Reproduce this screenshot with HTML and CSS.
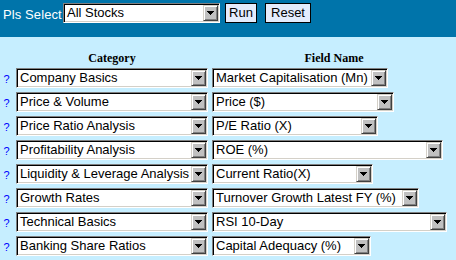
FILE: index.html
```html
<!DOCTYPE html>
<html>
<head>
<meta charset="utf-8">
<link rel="stylesheet" href="styles.css">
</head>
<body>
<header class="top">
  <span class="lbl">Pls Select</span>
  <span class="sel sel-stocks"><span class="val">All Stocks</span><span class="btn"><svg width="7" height="4" viewBox="0 0 7 4"><polygon points="0,0 7,0 3.5,4" fill="#000"/></svg></span></span>
  <button class="pb pb-run">Run</button>
  <button class="pb pb-reset">Reset</button>
</header>
<main class="grid">
  <div class="hd hd-cat">Category</div>
  <div class="hd hd-field">Field Name</div>

  <a class="q">?</a>
  <span class="sel cat"><span class="val">Company Basics</span><span class="btn"><svg width="7" height="4" viewBox="0 0 7 4"><polygon points="0,0 7,0 3.5,4" fill="#000"/></svg></span></span>
  <span class="sel fld w176"><span class="val">Market Capitalisation (Mn)</span><span class="btn"><svg width="7" height="4" viewBox="0 0 7 4"><polygon points="0,0 7,0 3.5,4" fill="#000"/></svg></span></span>

  <a class="q">?</a>
  <span class="sel cat"><span class="val">Price &amp; Volume</span><span class="btn"><svg width="7" height="4" viewBox="0 0 7 4"><polygon points="0,0 7,0 3.5,4" fill="#000"/></svg></span></span>
  <span class="sel fld w182"><span class="val">Price ($)</span><span class="btn"><svg width="7" height="4" viewBox="0 0 7 4"><polygon points="0,0 7,0 3.5,4" fill="#000"/></svg></span></span>

  <a class="q">?</a>
  <span class="sel cat"><span class="val">Price Ratio Analysis</span><span class="btn"><svg width="7" height="4" viewBox="0 0 7 4"><polygon points="0,0 7,0 3.5,4" fill="#000"/></svg></span></span>
  <span class="sel fld w166"><span class="val">P/E Ratio (X)</span><span class="btn"><svg width="7" height="4" viewBox="0 0 7 4"><polygon points="0,0 7,0 3.5,4" fill="#000"/></svg></span></span>

  <a class="q">?</a>
  <span class="sel cat"><span class="val">Profitability Analysis</span><span class="btn"><svg width="7" height="4" viewBox="0 0 7 4"><polygon points="0,0 7,0 3.5,4" fill="#000"/></svg></span></span>
  <span class="sel fld w231"><span class="val">ROE (%)</span><span class="btn"><svg width="7" height="4" viewBox="0 0 7 4"><polygon points="0,0 7,0 3.5,4" fill="#000"/></svg></span></span>

  <a class="q">?</a>
  <span class="sel cat"><span class="val">Liquidity &amp; Leverage Analysis</span><span class="btn"><svg width="7" height="4" viewBox="0 0 7 4"><polygon points="0,0 7,0 3.5,4" fill="#000"/></svg></span></span>
  <span class="sel fld w161"><span class="val">Current Ratio(X)</span><span class="btn"><svg width="7" height="4" viewBox="0 0 7 4"><polygon points="0,0 7,0 3.5,4" fill="#000"/></svg></span></span>

  <a class="q">?</a>
  <span class="sel cat"><span class="val">Growth Rates</span><span class="btn"><svg width="7" height="4" viewBox="0 0 7 4"><polygon points="0,0 7,0 3.5,4" fill="#000"/></svg></span></span>
  <span class="sel fld w207"><span class="val">Turnover Growth Latest FY (%)</span><span class="btn"><svg width="7" height="4" viewBox="0 0 7 4"><polygon points="0,0 7,0 3.5,4" fill="#000"/></svg></span></span>

  <a class="q">?</a>
  <span class="sel cat"><span class="val">Technical Basics</span><span class="btn"><svg width="7" height="4" viewBox="0 0 7 4"><polygon points="0,0 7,0 3.5,4" fill="#000"/></svg></span></span>
  <span class="sel fld w235"><span class="val">RSI 10-Day</span><span class="btn"><svg width="7" height="4" viewBox="0 0 7 4"><polygon points="0,0 7,0 3.5,4" fill="#000"/></svg></span></span>

  <a class="q">?</a>
  <span class="sel cat"><span class="val">Banking Share Ratios</span><span class="btn"><svg width="7" height="4" viewBox="0 0 7 4"><polygon points="0,0 7,0 3.5,4" fill="#000"/></svg></span></span>
  <span class="sel fld w159"><span class="val">Capital Adequacy (%)</span><span class="btn"><svg width="7" height="4" viewBox="0 0 7 4"><polygon points="0,0 7,0 3.5,4" fill="#000"/></svg></span></span>
</main>
</body>
</html>
```
FILE: styles.css
```css
html, body {
  margin: 0;
  padding: 0;
}
body {
  background: #c6eeff;
  font-family: "Liberation Sans", Arial, sans-serif;
  font-size: 13px;
  color: #000;
  width: 456px;
  height: 260px;
  overflow: hidden;
}
.top {
  background: #0074aa;
  height: 37px;
  box-sizing: border-box;
  padding: 3px 0 0 3px;
  display: flex;
  align-items: flex-start;
}
.lbl {
  color: #fff;
  width: 60px;
  line-height: 20px;
  padding-top: 2px;
  white-space: nowrap;
  letter-spacing: 0.1px;
}
.sel {
  display: flex;
  height: 20px;
  box-sizing: border-box;
  background: #fff;
  border: 1px solid;
  border-color: #808080 #ffffff #ffffff #808080;
  box-shadow: inset 1px 1px 0 #000, inset -1px -1px 0 #d4d0c8;
  padding: 1px;
}
.sel .val {
  flex: 1;
  min-width: 0;
  padding-left: 2px;
  line-height: 16px;
  white-space: nowrap;
  overflow: hidden;
}
.sel .btn {
  width: 15px;
  height: 16px;
  box-sizing: border-box;
  background: #c0c0c0;
  border: 1px solid;
  border-color: #d4d0c8 #404040 #404040 #d4d0c8;
  box-shadow: inset 1px 1px 0 #fff, inset -1px -1px 0 #808080;
  display: flex;
  align-items: center;
  justify-content: center;
}
.sel .btn svg {
  display: block;
  shape-rendering: crispEdges;
}
.sel-stocks {
  width: 157px;
}
.pb {
  font-family: "Liberation Sans", Arial, sans-serif;
  font-size: 13px;
  height: 20px;
  background: #e4ecfc;
  border: 1px solid #000;
  padding: 0;
  margin: 0;
  color: #000;
  line-height: 18px;
}
.pb-run {
  margin-left: 5px;
  width: 32px;
}
.pb-reset {
  margin-left: 8px;
  width: 46px;
}
.grid {
  display: grid;
  grid-template-columns: 12px 192px 1fr;
  column-gap: 4px;
  row-gap: 4px;
  padding-top: 15px;
  align-items: center;
}
.hd {
  font-family: "Liberation Serif", "Times New Roman", serif;
  font-weight: bold;
  font-size: 12px;
  line-height: 13px;
  text-align: center;
  margin-bottom: -1px;
}
.hd-cat {
  grid-column: 2;
}
.hd-field {
  grid-column: 3;
}
.q {
  color: #0000ff;
  font-size: 11px;
  text-align: center;
  padding-left: 1px;
  padding-top: 1px;
}
.cat {
  width: 192px;
}
.w176 { width: 176px; }
.w182 { width: 182px; }
.w166 { width: 166px; }
.w231 { width: 231px; }
.w161 { width: 161px; }
.w207 { width: 207px; }
.w235 { width: 235px; }
.w159 { width: 159px; }
```
